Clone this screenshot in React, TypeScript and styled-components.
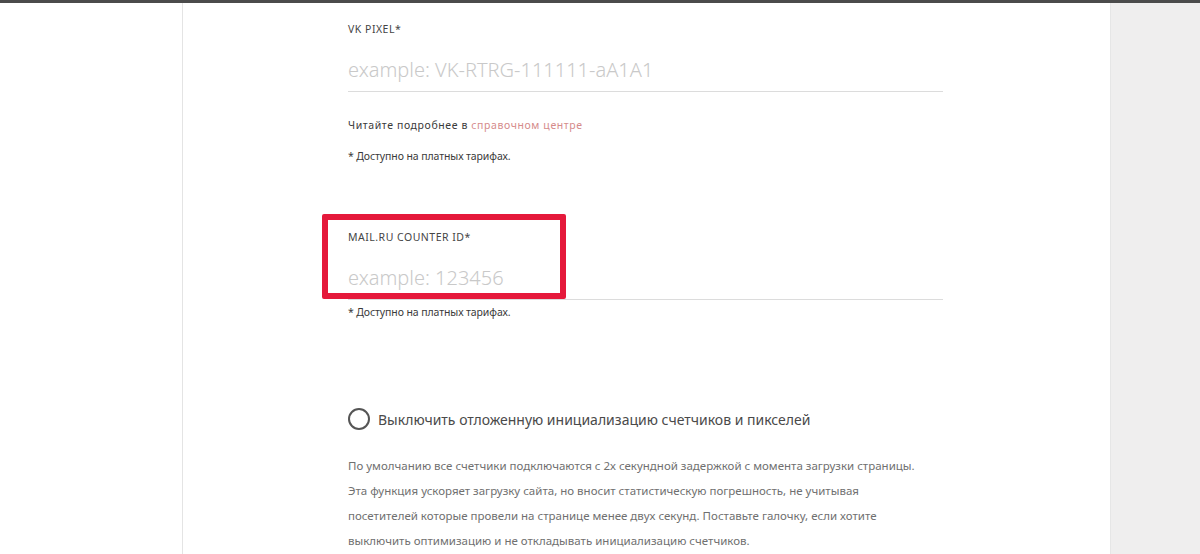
import styled, { createGlobalStyle } from 'styled-components'

const GlobalStyle = createGlobalStyle`
  html, body {
    margin: 0;
    padding: 0;
    background: #fff;
  }
  body {
    font-family: 'Noto Sans', 'Liberation Sans', sans-serif;
    -webkit-font-smoothing: antialiased;
  }
`

const Page = styled.div`
  height: 554px;
  box-sizing: border-box;
  border-top: 3px solid #4b4b4b;
  display: flex;
  overflow: hidden;
`

const Gutter = styled.div`
  width: 182px;
  flex-shrink: 0;
  border-right: 1px solid #e4e4e4;
  background: #fff;
`

const Main = styled.main`
  flex: 1;
  padding: 19px 0 0 165px;
  background: #fff;
`

const Aside = styled.aside`
  width: 89px;
  flex-shrink: 0;
  background: #efeeee;
  border-left: 1px solid #e6e6e6;
`

const Column = styled.div`
  width: 595px;
`

const Field = styled.div<{ $top?: number }>`
  position: relative;
  margin-top: ${({ $top = 0 }) => $top}px;
`

const Label = styled.div`
  font-size: 10.5px;
  line-height: 14px;
  letter-spacing: 0.5px;
  text-transform: uppercase;
  color: #454545;
`

const Input = styled.input`
  display: block;
  width: 100%;
  box-sizing: border-box;
  height: 45px;
  margin-top: 11px;
  padding: 0;
  border: 0;
  border-bottom: 1px solid #dcdcdc;
  background: transparent;
  font-family: inherit;
  font-size: 20px;
  font-weight: 300;
  color: #333;
  outline: none;
  &::placeholder {
    color: #c9c9c9;
  }
`

const Small = styled.p<{ $top: number; $wide?: boolean }>`
  margin: ${({ $top }) => $top}px 0 0;
  font-size: 10.5px;
  line-height: 14px;
  letter-spacing: ${({ $wide }) => ($wide ? '0.6px' : '-0.1px')};
  color: #3a3a3a;
  a {
    color: #d58b8b;
    text-decoration: none;
  }
`

/* red frame drawn over the highlighted field */
const Highlight = styled.div`
  position: absolute;
  left: -26px;
  top: -16px;
  width: 244px;
  height: 85px;
  box-sizing: border-box;
  border: 6px solid #e5193b;
  border-radius: 2px;
  pointer-events: none;
`

const Toggle = styled.label`
  display: flex;
  align-items: center;
  gap: 8px;
  margin-top: 88px;
  height: 24px;
  cursor: pointer;
`

const Radio = styled.span`
  width: 18px;
  height: 18px;
  border: 2px solid #555;
  border-radius: 50%;
  flex-shrink: 0;
`

const ToggleText = styled.span`
  font-size: 14px;
  color: #4a4a4a;
`

const Description = styled.p`
  margin: 22px 0 0;
  font-size: 11.5px;
  line-height: 25px;
  color: #707070;
  white-space: nowrap;
`

export default function App() {
  return (
    <>
      <GlobalStyle />
      <Page>
        <Gutter />
        <Main>
          <Column>
            <Field>
              <Label>VK Pixel*</Label>
              <Input placeholder="example: VK-RTRG-111111-aA1A1" />
            </Field>
            <Small $top={26} $wide>
              Читайте подробнее в <a href="#">справочном центре</a>
            </Small>
            <Small $top={17}>* Доступно на платных тарифах.</Small>

            <Field $top={67}>
              <Label>Mail.ru counter ID*</Label>
              <Input placeholder="example: 123456" />
              <Highlight />
            </Field>
            <Small $top={5}>* Доступно на платных тарифах.</Small>

            <Toggle>
              <Radio />
              <ToggleText>Выключить отложенную инициализацию счетчиков и пикселей</ToggleText>
            </Toggle>

            <Description>
              По умолчанию все счетчики подключаются с 2х секундной задержкой с момента загрузки страницы.
              <br />
              Эта функция ускоряет загрузку сайта, но вносит статистическую погрешность, не учитывая
              <br />
              посетителей которые провели на странице менее двух секунд. Поставьте галочку, если хотите
              <br />
              выключить оптимизацию и не откладывать инициализацию счетчиков.
            </Description>
          </Column>
        </Main>
        <Aside />
      </Page>
    </>
  )
}
